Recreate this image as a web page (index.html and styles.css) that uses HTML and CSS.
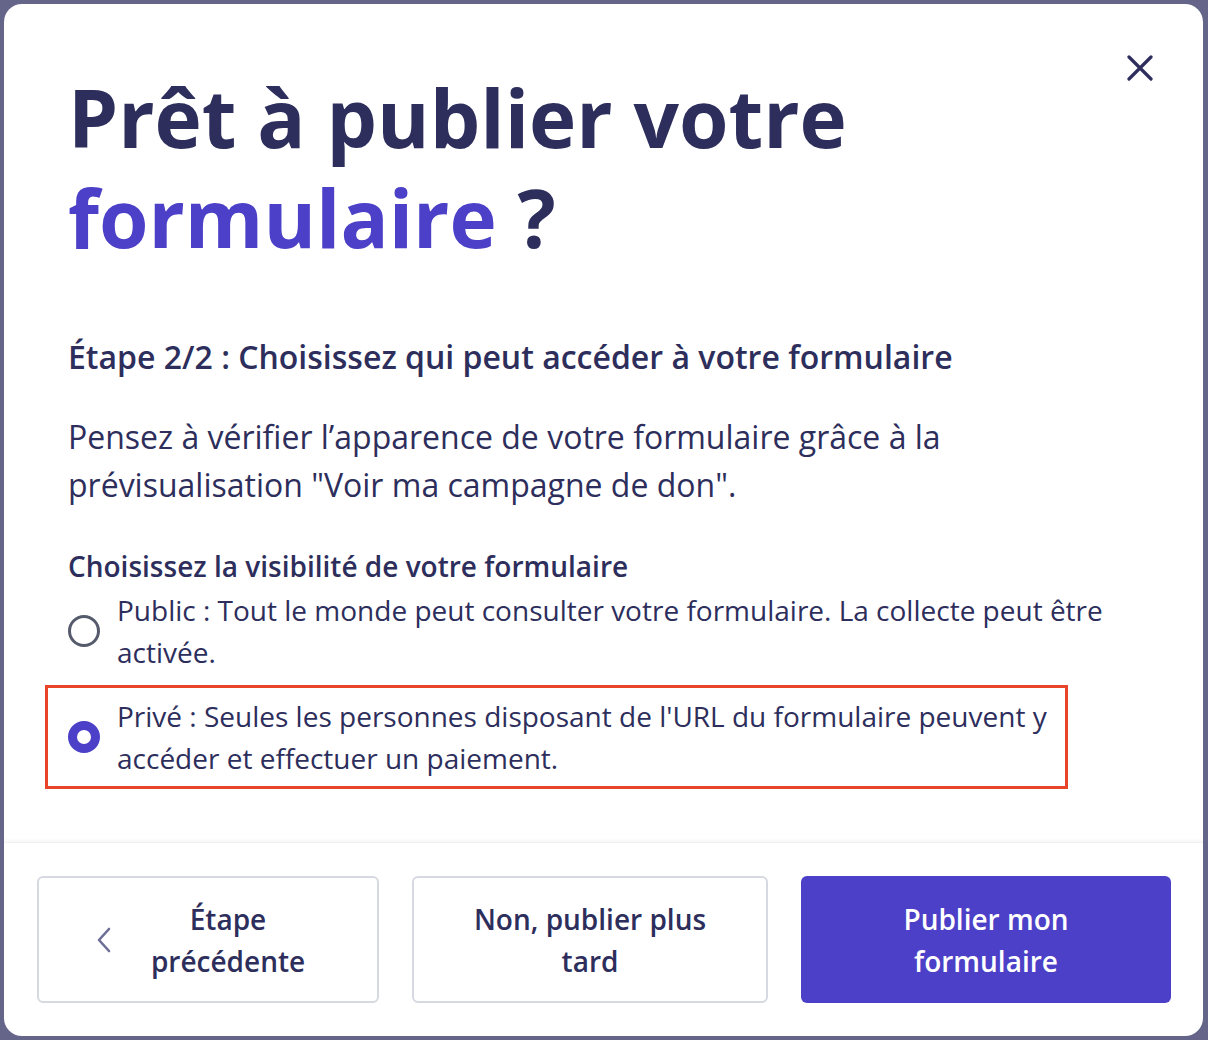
FILE: index.html
```html
<!DOCTYPE html>
<html lang="fr">
<head>
<meta charset="utf-8">
<link rel="stylesheet" href="styles.css">
</head>
<body>
<div class="backdrop">
  <div class="modal">
    <button class="close" aria-label="Fermer">
      <svg width="26" height="26" viewBox="0 0 26 26"><path d="M2 2 L24 24 M24 2 L2 24" stroke="#2d2e5c" stroke-width="3.2" stroke-linecap="round"/></svg>
    </button>
    <div class="content">
      <h1 class="title">Prêt à publier votre <span class="accent">formulaire</span> ?</h1>
      <h2 class="step">Étape 2/2 : Choisissez qui peut accéder à votre formulaire</h2>
      <p class="hint">Pensez à vérifier l’apparence de votre formulaire grâce à la prévisualisation "Voir ma campagne de don".</p>
      <div class="group">
        <div class="group-label">Choisissez la visibilité de votre formulaire</div>
        <label class="option">
          <span class="radio"></span>
          <span class="option-text">Public : Tout le monde peut consulter votre formulaire. La collecte peut être activée.</span>
        </label>
        <label class="option option-selected">
          <span class="radio radio-on"></span>
          <span class="option-text">Privé : Seules les personnes disposant de l'URL du formulaire peuvent y accéder et effectuer un paiement.</span>
        </label>
      </div>
    </div>
    <div class="footer">
      <button class="btn btn-outline btn-back">
        <svg class="chev" width="14" height="26" viewBox="0 0 14 26"><path d="M12 2 L2 13 L12 24" fill="none" stroke="#6d6e96" stroke-width="2.6" stroke-linecap="round" stroke-linejoin="round"/></svg>
        <span>Étape<br>précédente</span>
      </button>
      <button class="btn btn-outline">Non, publier plus<br>tard</button>
      <button class="btn btn-primary">Publier mon<br>formulaire</button>
    </div>
  </div>
</div>
</body>
</html>
```

FILE: styles.css
```css
* { box-sizing: border-box; }
html, body { margin: 0; padding: 0; }
body {
  font-family: "Open Sans", "Noto Sans", sans-serif;
  color: #2d2e5c;
  background: #646589;
}
.backdrop {
  width: 1208px;
  height: 1040px;
  padding: 4px 5px 4px 4px;
  background: #646589;
}
.modal {
  position: relative;
  height: 1032px;
  background: #fff;
  border-radius: 18px;
  display: flex;
  flex-direction: column;
  overflow: hidden;
}
.close {
  position: absolute;
  top: 47px;
  right: 46px;
  width: 34px;
  height: 34px;
  padding: 0;
  border: 0;
  background: none;
  display: flex;
  align-items: center;
  justify-content: center;
}
.content {
  flex: 1;
  padding: 63px 60px 0 64px;
}
.title {
  margin: 0;
  font-size: 80px;
  line-height: 100px;
  font-weight: 700;
  color: #2d2e5c;
  width: 820px;
}
.accent { color: #4b40c7; }
.step {
  margin: 68px 0 0;
  font-size: 32px;
  line-height: 44px;
  font-weight: 600;
}
.hint {
  margin: 34px 0 0;
  font-size: 32px;
  line-height: 48px;
  font-weight: 400;
  max-width: 900px;
}
.group { margin-top: 37px; }
.group-label {
  font-size: 28px;
  line-height: 40px;
  font-weight: 600;
}
.option {
  display: flex;
  align-items: center;
  gap: 17px;
  font-size: 28px;
  line-height: 42px;
  font-weight: 400;
  margin-top: 3px;
}
.option-text { flex: 1; max-width: 1000px; }
.option + .option { margin-top: 12px; }
.option-selected {
  margin-left: -23px;
  width: 1023px;
  padding: 7px 6px 7px 20px;
  border: 3px solid #e8442a;
}
.radio {
  flex: none;
  width: 32px;
  height: 32px;
  border-radius: 50%;
  border: 3px solid #555a6c;
}
.radio-on {
  border: 9px solid #4b40c7;
}
.footer {
  display: grid;
  grid-template-columns: 342px 356px 1fr;
  gap: 33px;
  padding: 33px 32px 33px 33px;
  box-shadow: 0 -2px 3px rgba(0,0,0,0.04);
  border-top: 1px solid #f1f1f3;
}
.btn {
  height: 127px;
  border-radius: 6px;
  font-family: inherit;
  font-size: 28px;
  line-height: 42px;
  font-weight: 600;
  color: #2d2e5c;
  display: flex;
  align-items: center;
  justify-content: center;
  text-align: center;
}
.btn-outline {
  background: #fff;
  border: 2px solid #d6d9e0;
}
.btn-back { gap: 40px; padding-right: 20px; }
.btn-primary {
  background: #4b40c7;
  border: 0;
  color: #fff;
}
```
